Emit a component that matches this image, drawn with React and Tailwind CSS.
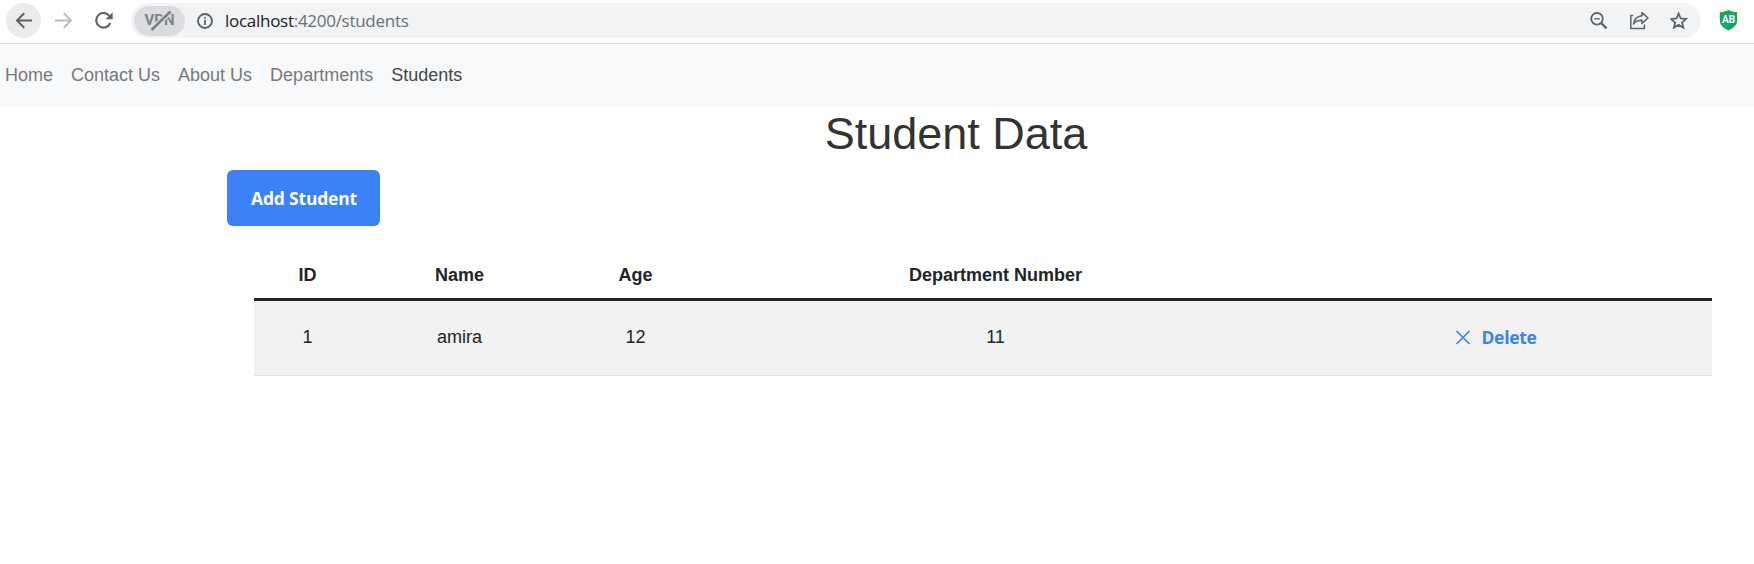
import React from "react";

const navItems = ["Home", "Contact Us", "About Us", "Departments", "Students"];
const students = [{ id: 1, name: "amira", age: 12, department: 11 }];

function BrowserBar() {
  return (
    <header className="flex h-11 w-full items-start border-b border-[#dadce0] bg-white pt-[3px] pl-1.5 text-[#5f6368]">
      <button aria-label="Back" className="flex size-[35px] shrink-0 items-center justify-center rounded-full bg-[#ebebec]">
        <svg width="18" height="18" viewBox="0 0 18 18" fill="none" stroke="currentColor" strokeWidth="2">
          <path d="M17 8.500H2.500M9.200 1.300 2 8.500l7.200 7.200" />
        </svg>
      </button>
      <button aria-label="Forward" className="ml-[14px] flex h-[35px] w-[18px] shrink-0 items-center justify-center text-[#bbbdbf]">
        <svg width="18" height="18" viewBox="0 0 18 18" fill="none" stroke="currentColor" strokeWidth="2">
          <path d="M0 8.500h15.500M8.800 1.300 16 8.500l-7.200 7.200" />
        </svg>
      </button>
      <button aria-label="Reload" className="ml-[21px] flex h-[35px] w-5 shrink-0 items-center justify-center">
        <svg width="20" height="18" viewBox="0 0 20 18" fill="none">
          <path d="M16.300 11A7.300 7.300 0 1 1 15.300 3.800" stroke="currentColor" strokeWidth="2.100" />
          <path d="M18.600.300v7h-7z" fill="currentColor" />
        </svg>
      </button>
      <div className="ml-[17px] flex h-[35px] w-[1570px] shrink-0 items-center rounded-full bg-[#f1f3f4] pl-[3px]">
        <div className="relative flex h-[30px] w-[51px] items-center justify-center rounded-full bg-[#dadce0] font-[Roboto,sans-serif] text-[15px] font-bold text-[#808387]">
          VPN
          <svg className="absolute top-[4px] left-[14px]" width="24" height="22" viewBox="0 0 24 22" fill="none">
            <path d="m4 19.500 18.500-18" stroke="#dadce0" strokeWidth="5.400" />
            <path d="m3.500 20 19-18.500" stroke="#7b7e82" strokeWidth="2.500" />
          </svg>
        </div>
        <svg className="ml-3 shrink-0" width="16" height="16" viewBox="0 0 16 16" fill="none">
          <circle cx="8" cy="8" r="7" stroke="currentColor" strokeWidth="1.900" />
          <path d="M8 7v5M8 3.900v1.800" stroke="currentColor" strokeWidth="1.800" />
        </svg>
        <div className="ml-3 w-[1365px] font-['Open_Sans','Noto_Sans',sans-serif] text-[17px] leading-6 tracking-[-0.280px] text-[#6b6f73]">
          <span className="text-[#202124]">localhost</span>:4200/students
        </div>
        <svg className="shrink-0" width="18" height="18" viewBox="0 0 18 18" fill="none" stroke="currentColor">
          <circle cx="7" cy="6.800" r="5.800" strokeWidth="1.900" />
          <path d="m11.200 11 5.300 5.300" strokeWidth="2.400" />
          <path d="M4.200 6.800h5.600" strokeWidth="1.400" />
        </svg>
        <svg className="ml-[21px] shrink-0" width="20" height="19" viewBox="0 0 20 19" fill="none" stroke="currentColor" strokeWidth="1.500">
          <path d="M1.800 4.200v13.400h13.600v-4M1.100 4.600h3" />
          <path d="M12.900 1.600 19 7l-6.100 5.400V9.300c-4 0-6.700 1-8.400 3.700.500-4.500 3.400-7.500 8.400-8.200z" strokeLinejoin="round" />
        </svg>
        <svg className="ml-[21px] shrink-0" width="18" height="18" viewBox="0 0 18 18" fill="none">
          <path d="m8.600 1.500 2.100 5 5.400.500-4.100 3.500 1.300 5.200-4.700-2.800-4.700 2.800 1.300-5.200L1.100 7l5.400-.500z" stroke="currentColor" strokeWidth="1.800" />
        </svg>
      </div>
      <div className="relative mt-[7px] ml-[18px] flex h-5 w-[19px] shrink-0 justify-center">
        <svg className="absolute inset-0" width="19" height="21" viewBox="0 0 19 21">
          <path d="M9.500 0c2.300 1.300 5.200 2 8.700 2.300v7.700c0 5-3.500 8.200-8.700 10.500C4.300 18.200.800 15 .800 10V2.300C4.300 2 7.200 1.300 9.500 0z" fill="#16a765" />
        </svg>
        <span className="relative font-[Roboto,sans-serif] text-[10px] leading-[19px] font-bold text-white">AB</span>
      </div>
    </header>
  );
}

function NavBar() {
  return (
    <nav className="flex h-[63px] items-center bg-[#f8f9fb] pl-[5px]">
      <ul className="flex gap-[18px] text-lg leading-[27px]">
        {navItems.map((item) => (
          <li key={item} className={item === "Students" ? "text-[#464748]" : "text-[#777879]"}>
            {item}
          </li>
        ))}
      </ul>
    </nav>
  );
}

export default function App() {
  return (
    <div className="h-[564px] w-[1754px] overflow-hidden bg-white font-['Liberation_Sans',Arial,sans-serif] text-[#212529]">
      <BrowserBar />
      <NavBar />
      <main className="pl-[227px]">
        <h1 className="w-[1458px] text-center text-[45px] leading-[54px] text-[#333]">Student Data</h1>
        <button className="mt-[9px] flex h-14 w-[153px] items-center justify-center rounded-md bg-[#3b82f6] pl-px font-['Open_Sans','Noto_Sans',sans-serif] text-[17.500px] font-bold tracking-[-0.200px] text-white">
          Add Student
        </button>
        <table className="mt-[23px] ml-[27px] w-[1458px] table-fixed border-separate border-spacing-0 text-center text-lg leading-[27px]">
          <colgroup>
            <col className="w-[107px]" />
            <col className="w-[197px]" />
            <col className="w-[155px]" />
            <col className="w-[565px]" />
            <col className="w-[434px]" />
          </colgroup>
          <thead className="[&_th]:border-b-[3px] [&_th]:border-[#212529] [&_th]:pt-[3px]">
            <tr className="h-[52px]">
              <th>ID</th>
              <th>Name</th>
              <th>Age</th>
              <th>Department Number</th>
              <th />
            </tr>
          </thead>
          <tbody className="[&_td]:border-b [&_td]:border-[#dee0e2] [&_td]:pb-[2px]">
            {students.map((s) => (
              <tr key={s.id} className="h-[75px] bg-[#f1f1f1]">
                <td>{s.id}</td>
                <td>{s.name}</td>
                <td>{s.age}</td>
                <td>{s.department}</td>
                <td>
                  <button className="ml-[2px] inline-flex items-center gap-[10px] align-middle font-['Open_Sans','Noto_Sans',sans-serif] text-[17.500px] font-bold tracking-[-0.300px] text-[#3b82f6]">
                    <svg width="16" height="16" viewBox="0 0 16 16" fill="none">
                      <path d="m1.500 2 13 13m0-13-13 13" stroke="currentColor" strokeWidth="1.700" />
                    </svg>
                    Delete
                  </button>
                </td>
              </tr>
            ))}
          </tbody>
        </table>
      </main>
    </div>
  );
}
